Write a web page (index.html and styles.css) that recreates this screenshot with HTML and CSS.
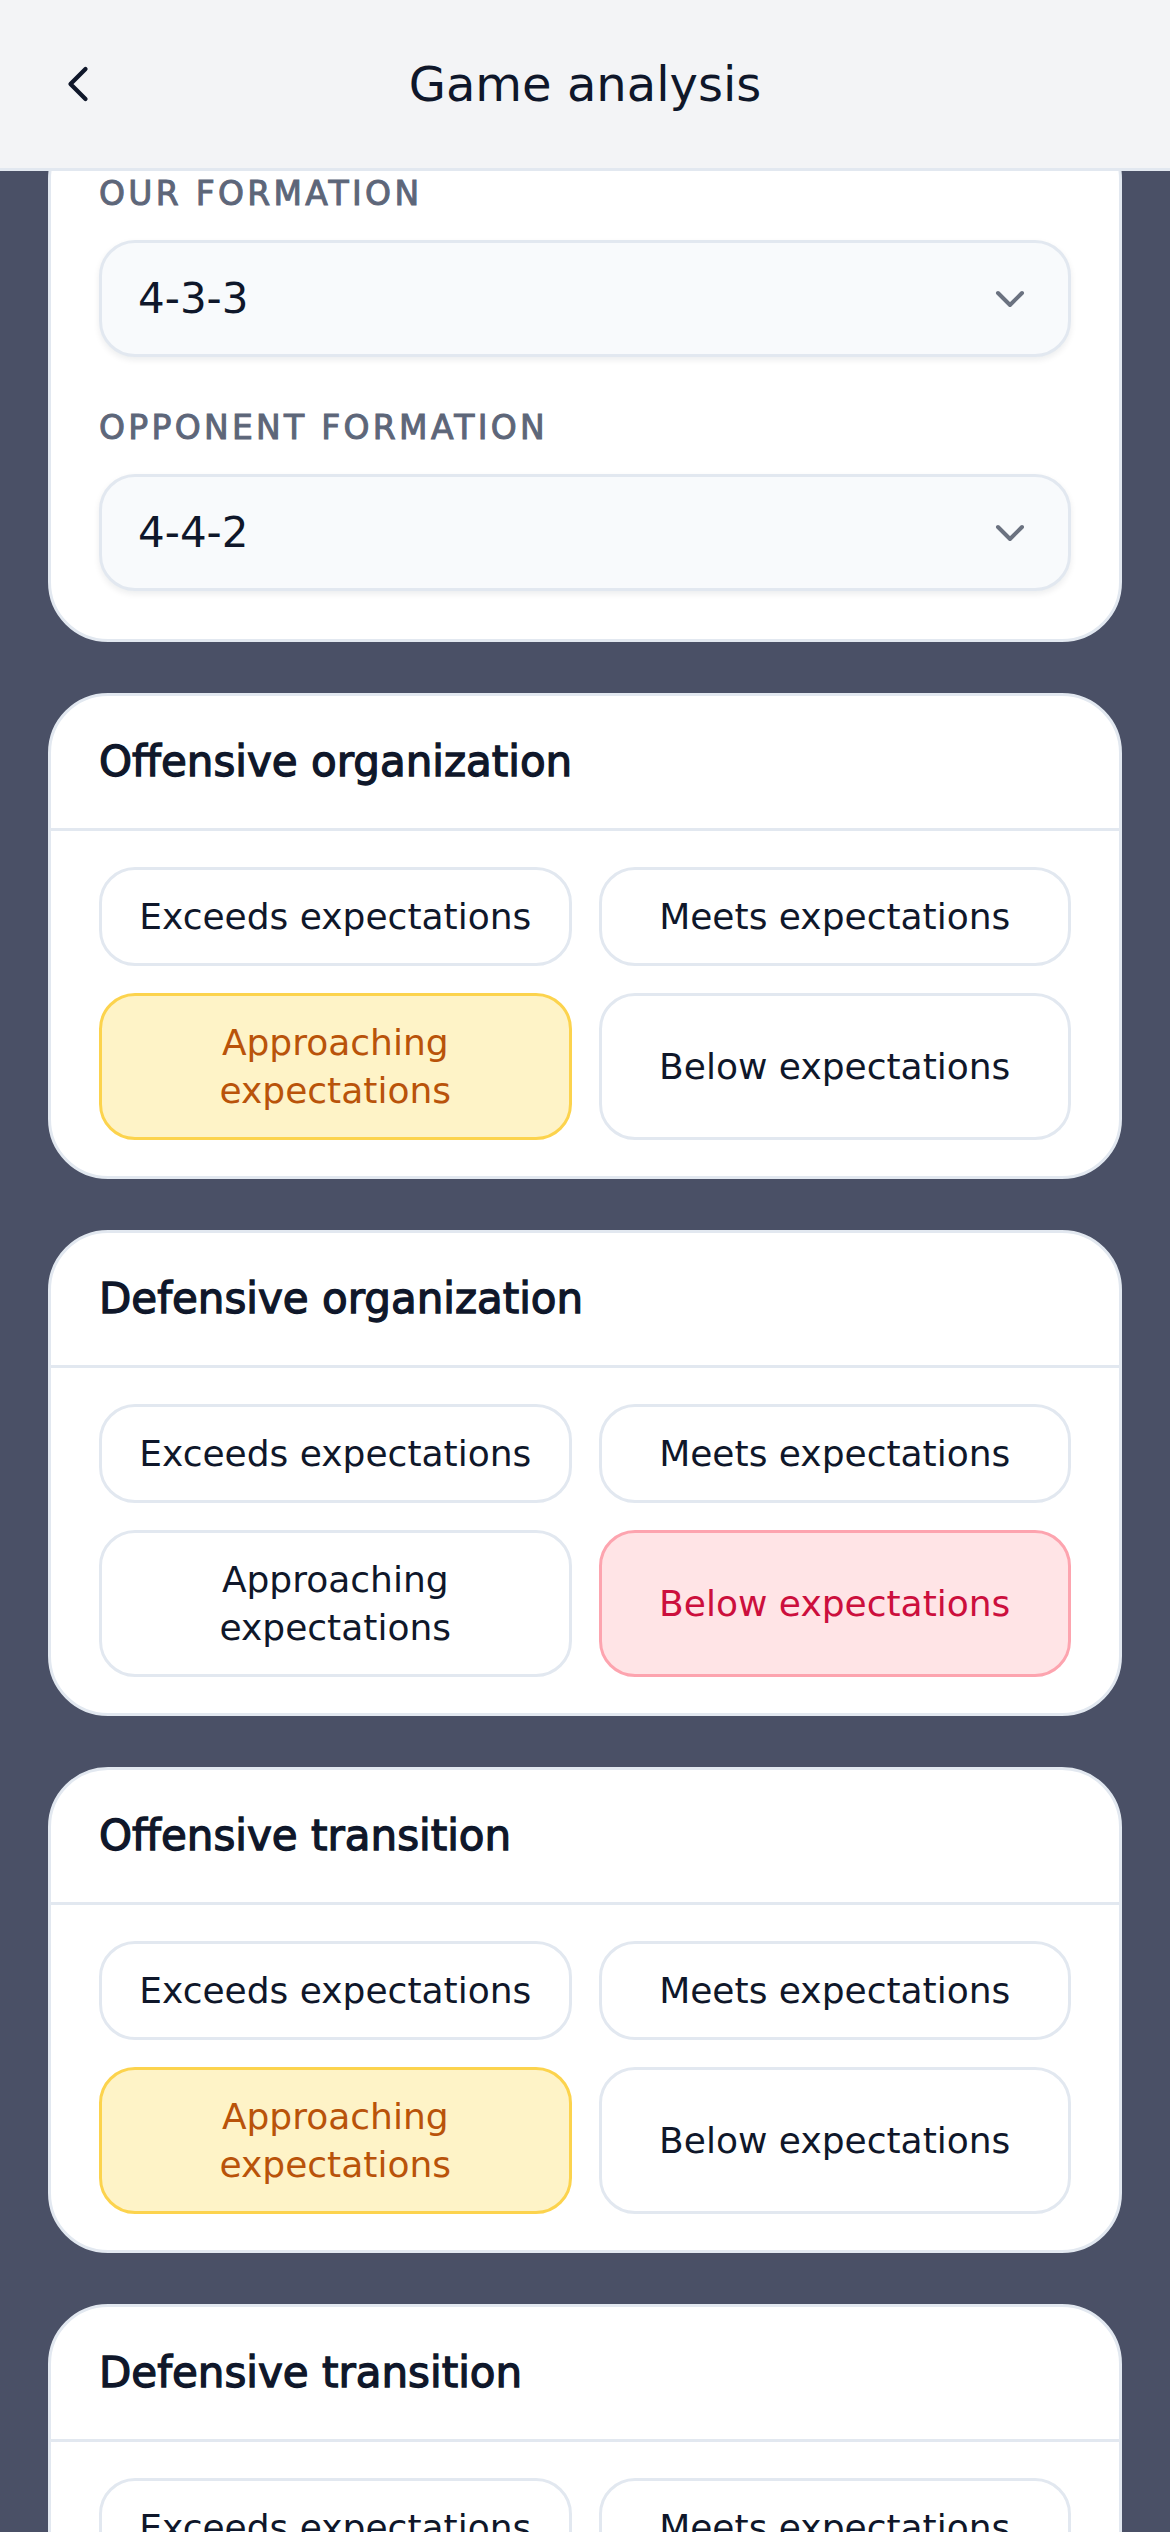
FILE: index.html
```html
<!DOCTYPE html>
<html lang="en">
<head>
<meta charset="utf-8">
<title>Game analysis</title>
<link rel="stylesheet" href="styles.css">
</head>
<body>
<header class="topbar">
  <div class="topbar-side">
    <button class="back-btn" aria-label="Back">
      <svg width="60" height="60" viewBox="0 0 24 24" fill="none" stroke="#0f172a" stroke-width="1.7" stroke-linecap="round" stroke-linejoin="round"><path d="M15 18l-6-6 6-6"/></svg>
    </button>
  </div>
  <h1 class="topbar-title">Game analysis</h1>
  <div class="topbar-side"></div>
</header>
<main class="viewport">
  <div class="scroll-content">
    <section class="card card-form">
      <div class="field">
        <div class="field-label">OUR FORMATION</div>
        <div class="select">
          <span>4-3-3</span>
          <svg width="48" height="48" viewBox="0 0 24 24" fill="none" stroke="#6b7280" stroke-width="2" stroke-linecap="round" stroke-linejoin="round"><path d="M6 9l6 6 6-6"/></svg>
        </div>
      </div>
      <div class="field">
        <div class="field-label">OPPONENT FORMATION</div>
        <div class="select">
          <span>4-4-2</span>
          <svg width="48" height="48" viewBox="0 0 24 24" fill="none" stroke="#6b7280" stroke-width="2" stroke-linecap="round" stroke-linejoin="round"><path d="M6 9l6 6 6-6"/></svg>
        </div>
      </div>
    </section>

    <section class="card">
      <div class="card-head"><h2 class="card-title">Offensive organization</h2></div>
      <div class="card-body">
        <div class="rating-grid">
          <button class="rating">Exceeds expectations</button>
          <button class="rating">Meets expectations</button>
          <button class="rating rating-warn">Approaching expectations</button>
          <button class="rating">Below expectations</button>
        </div>
      </div>
    </section>

    <section class="card">
      <div class="card-head"><h2 class="card-title">Defensive organization</h2></div>
      <div class="card-body">
        <div class="rating-grid">
          <button class="rating">Exceeds expectations</button>
          <button class="rating">Meets expectations</button>
          <button class="rating">Approaching expectations</button>
          <button class="rating rating-bad">Below expectations</button>
        </div>
      </div>
    </section>

    <section class="card">
      <div class="card-head"><h2 class="card-title">Offensive transition</h2></div>
      <div class="card-body">
        <div class="rating-grid">
          <button class="rating">Exceeds expectations</button>
          <button class="rating">Meets expectations</button>
          <button class="rating rating-warn">Approaching expectations</button>
          <button class="rating">Below expectations</button>
        </div>
      </div>
    </section>

    <section class="card">
      <div class="card-head"><h2 class="card-title">Defensive transition</h2></div>
      <div class="card-body">
        <div class="rating-grid">
          <button class="rating">Exceeds expectations</button>
          <button class="rating">Meets expectations</button>
          <button class="rating">Approaching expectations</button>
          <button class="rating">Below expectations</button>
        </div>
      </div>
    </section>
  </div>
</main>
</body>
</html>
```

FILE: styles.css
```css
* { box-sizing: border-box; }

body {
  margin: 0;
  width: 1170px;
  height: 2532px;
  overflow: hidden;
  background: #4a5066;
  font-family: "DejaVu Sans", "Liberation Sans", sans-serif;
  color: #0f172a;
}

.topbar {
  position: relative;
  z-index: 2;
  height: 171px;
  padding: 0 48px;
  background: #f3f4f6;
  border-bottom: 3px solid #e2e8f0;
  display: grid;
  grid-template-columns: 1fr auto 1fr;
  align-items: center;
}

.back-btn {
  width: 60px;
  height: 60px;
  padding: 0;
  border: 0;
  background: none;
  display: flex;
}

.topbar-title {
  margin: 0;
  font-size: 48px;
  line-height: 60px;
  font-weight: 400;
  color: #0f172a;
}

.viewport {
  height: 2361px;
  overflow: hidden;
}

.scroll-content {
  display: flex;
  flex-direction: column;
  gap: 51px;
  padding: 48px;
  transform: translateY(-100px);
}

.card {
  background: #ffffff;
  border: 3px solid #e2e8f0;
  border-radius: 60px;
  overflow: hidden;
}

.card-form {
  padding: 48px;
  display: flex;
  flex-direction: column;
  gap: 47px;
}

.field-label {
  font-size: 33px;
  line-height: 48px;
  letter-spacing: 0.1em;
  color: #5d6679;
  -webkit-text-stroke: 1px #5d6679;
  margin-bottom: 22px;
}

.select {
  height: 117px;
  padding: 0 34px 0 36px;
  display: flex;
  align-items: center;
  justify-content: space-between;
  background: #f8fafc;
  border: 3px solid #e2e8f0;
  border-radius: 36px;
  box-shadow: 0 3px 6px rgba(15, 23, 42, 0.08);
  font-size: 42px;
  color: #0f172a;
}

.card-head {
  padding: 36px 48px;
  border-bottom: 3px solid #e2e8f0;
}

.card-title {
  margin: 0;
  font-size: 42px;
  line-height: 60px;
  font-weight: 400;
  color: #0f172a;
  -webkit-text-stroke: 1.3px #0f172a;
}

.card-body {
  padding: 36px 48px;
}

.rating-grid {
  display: grid;
  grid-template-columns: 1fr 1fr;
  gap: 27px;
}

.rating {
  font-family: inherit;
  font-size: 36px;
  line-height: 48px;
  padding: 22.5px 24px;
  border: 3px solid #e2e8f0;
  border-radius: 36px;
  background: #ffffff;
  color: #0f172a;
  display: flex;
  align-items: center;
  justify-content: center;
  text-align: center;
}

.rating-warn {
  background: #fef3c7;
  border-color: #fcd34d;
  color: #b9530a;
}

.rating-bad {
  background: #ffe4e6;
  border-color: #fda4af;
  color: #cc0f3d;
}
```
